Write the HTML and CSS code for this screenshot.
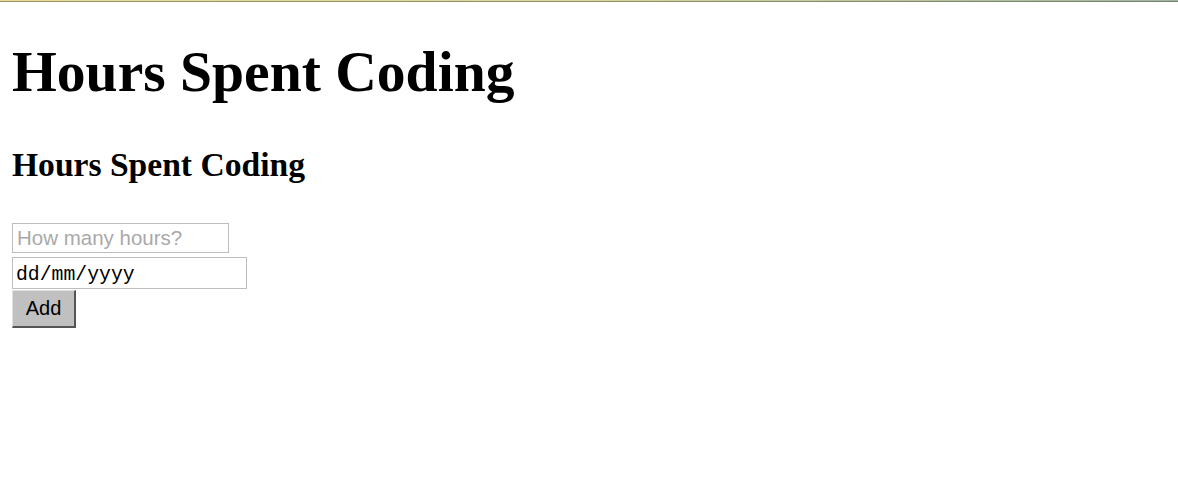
FILE: index.html
```html
<!DOCTYPE html>
<html>
<head>
<meta charset="utf-8">
<title>Hours Spent Coding</title>
<link rel="stylesheet" href="styles.css">
</head>
<body>
<div class="topline"></div>
<main class="page">
  <h1 class="title">Hours Spent Coding</h1>
  <h2 class="subtitle">Hours Spent Coding</h2>
  <form class="entry">
    <input class="hours" type="text" placeholder="How many hours?">
    <div class="date">dd/mm/yyyy</div>
    <button class="add" type="button">Add</button>
  </form>
</main>
</body>
</html>
```
FILE: styles.css
```css
html, body {
  margin: 0;
  padding: 0;
  background: #fff;
}
.topline {
  height: 2px;
  background: linear-gradient(to right, #e9dc9a 0%, #d8d79e 50%, #9fb5a5 100%);
  box-shadow: inset 0 -1px 0 rgba(90, 90, 60, 0.55);
}
.page {
  padding: 0 12px;
  font-family: "Liberation Serif", serif;
  color: #000;
}
.title {
  margin: 0;
  padding-top: 37px;
  font-size: 57.6px;
  line-height: 66px;
  font-weight: bold;
}
.subtitle {
  margin: 0;
  padding-top: 40px;
  font-size: 33.6px;
  line-height: 40px;
  font-weight: bold;
}
.entry {
  margin-top: 38px;
  display: flex;
  flex-direction: column;
  align-items: flex-start;
}
.hours {
  box-sizing: border-box;
  width: 217px;
  height: 30px;
  margin: 0;
  padding: 0 3px 0 4px;
  border: 1px solid #bdbdbd;
  font-family: "Liberation Sans", Arial, sans-serif;
  font-size: 20.5px;
  color: #000;
  outline: none;
}
.hours::placeholder {
  color: #a9a9a9;
}
.date {
  box-sizing: border-box;
  width: 235px;
  height: 32px;
  margin-top: 4px;
  padding: 5px 3px 0;
  border: 1px solid #bdbdbd;
  font-family: "Liberation Mono", "Courier New", monospace;
  font-size: 19.8px;
  line-height: 24px;
  color: #000;
}
.add {
  box-sizing: border-box;
  width: 64px;
  height: 38px;
  margin: 1px 0 0;
  padding: 0;
  background: #c0c0c0;
  border-style: solid;
  border-width: 1px 2px 2px 1px;
  border-color: #e0e0e0 #555 #555 #e0e0e0;
  font-family: "Liberation Sans", Arial, sans-serif;
  font-size: 20px;
  color: #000;
}
```
